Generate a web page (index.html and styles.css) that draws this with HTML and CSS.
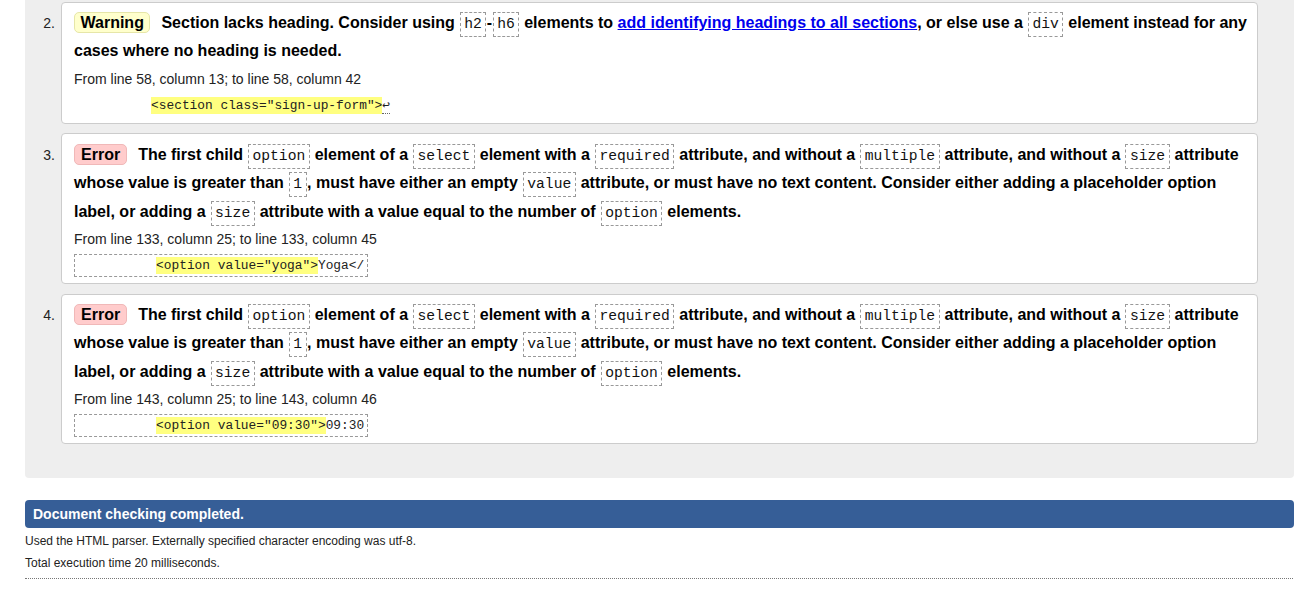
FILE: index.html
```
<!DOCTYPE html>
<html lang="en">
<head>
<meta charset="utf-8">
<title>Nu Html Checker results</title>
<link rel="stylesheet" href="styles.css">
</head>
<body>
<div class="page">
  <div class="results">
    <div class="item">
      <div class="num">2.</div>
      <div class="box">
        <p class="msg"><span class="badge warning">Warning</span>Section lacks heading. Consider using <code>h2</code>-<code>h6</code> elements to <a href="#">add identifying headings to all sections</a>, or else use a <code>div</code> element instead for any cases where no heading is needed.</p>
        <p class="loc">From line 58, column 13; to line 58, column 42</p>
        <p class="extract"><code class="plain">          <b>&lt;section class="sign-up-form"&gt;</b><span class="lf">↩</span></code></p>
      </div>
    </div>
    <div class="item">
      <div class="num">3.</div>
      <div class="box">
        <p class="msg"><span class="badge error">Error</span>The first child <code>option</code> element of a <code>select</code> element with a <code>required</code> attribute, and without a <code>multiple</code> attribute, and without a <code>size</code> attribute whose value is greater than <code>1</code>, must have either an empty <code>value</code> attribute, or must have no text content. Consider either adding a placeholder option label, or adding a <code>size</code> attribute with a value equal to the number of <code>option</code> elements.</p>
        <p class="loc">From line 133, column 25; to line 133, column 45</p>
        <p class="extract"><code class="boxed">          <b>&lt;option value="yoga"&gt;</b>Yoga&lt;/</code></p>
      </div>
    </div>
    <div class="item">
      <div class="num">4.</div>
      <div class="box">
        <p class="msg"><span class="badge error">Error</span>The first child <code>option</code> element of a <code>select</code> element with a <code>required</code> attribute, and without a <code>multiple</code> attribute, and without a <code>size</code> attribute whose value is greater than <code>1</code>, must have either an empty <code>value</code> attribute, or must have no text content. Consider either adding a placeholder option label, or adding a <code>size</code> attribute with a value equal to the number of <code>option</code> elements.</p>
        <p class="loc">From line 143, column 25; to line 143, column 46</p>
        <p class="extract"><code class="boxed">          <b>&lt;option value="09:30"&gt;</b>09:30</code></p>
      </div>
    </div>
  </div>
  <p class="done">Document checking completed.</p>
  <div class="stats">
    <p>Used the HTML parser. Externally specified character encoding was utf-8.</p>
    <p>Total execution time 20 milliseconds.</p>
  </div>
</div>
</body>
</html>
```
FILE: styles.css
```
html, body {
  margin: 0;
  padding: 0;
  background: #fff;
}
body {
  font-family: "Liberation Sans", Arial, sans-serif;
  color: #000;
}
.page {
  margin: 0 10px 0 25px;
}
.results {
  background: #eee;
  border-radius: 0 0 4px 4px;
  padding: 1.7px 36px 34px 0;
  display: flex;
  flex-direction: column;
  gap: 9.4px;
}
.item {
  display: flex;
  align-items: baseline;
}
.num {
  width: 36px;
  flex: none;
  box-sizing: border-box;
  padding-right: 6px;
  text-align: right;
  font-size: 14px;
  color: #222;
}
.box {
  flex: 1;
  min-width: 0;
  background: #fff;
  border: 1px solid #ccc;
  border-radius: 4px;
  padding: 6.2px 8px 6.6px 12px;
}
.msg {
  margin: 0;
  font-size: 16px;
  font-weight: bold;
  line-height: 28.5px;
}
.msg a {
  color: #00e;
  text-decoration: underline;
}
.badge {
  display: inline-block;
  line-height: 19px;
  padding: 0 6px;
  border-radius: 5px;
  margin-right: 11px;
  font-weight: bold;
}
.badge.warning {
  background: #ffffcc;
  border: 1px solid #e6e6a8;
  padding: 0 5.5px;
}
.badge.error {
  background: #ffcccc;
  border: 1px solid #f0b8b8;
}
.msg code {
  font-family: "Liberation Mono", "Courier New", monospace;
  font-size: 14.67px;
  line-height: 1;
  font-weight: normal;
  color: #111;
  border: 1px dashed #999;
  padding: 3px 3.5px 4px;
  margin: 0 0.5px;
}
.loc {
  margin: 0;
  font-size: 14px;
  line-height: 27.5px;
  color: #222;
}
.extract {
  margin: 0;
  height: 23px;
  display: flex;
  align-items: center;
}
.extract code {
  font-family: "Liberation Mono", "Courier New", monospace;
  font-size: 12.85px;
  white-space: pre;
  color: #222;
}
.extract code.boxed {
  display: inline-block;
  border: 1px dashed #999;
  padding: 0 3px 0 4px;
  line-height: 21px;
}
.extract b {
  font-weight: normal;
  background: #ffff80;
  padding: 1px 0;
}
.extract .lf {
  border-bottom: 1px dotted #666;
}
.done {
  margin: 22px 0 0;
  background: #365e97;
  color: #fff;
  font-size: 14px;
  font-weight: bold;
  line-height: 28px;
  padding: 0 8px;
  border-radius: 4px;
}
.stats {
  padding: 3px 0 3.5px;
  border-bottom: 1px dotted #777;
  margin-right: 1px;
}
.stats p {
  margin: 0;
  font-size: 12px;
  line-height: 21.6px;
  color: #222;
}
```
